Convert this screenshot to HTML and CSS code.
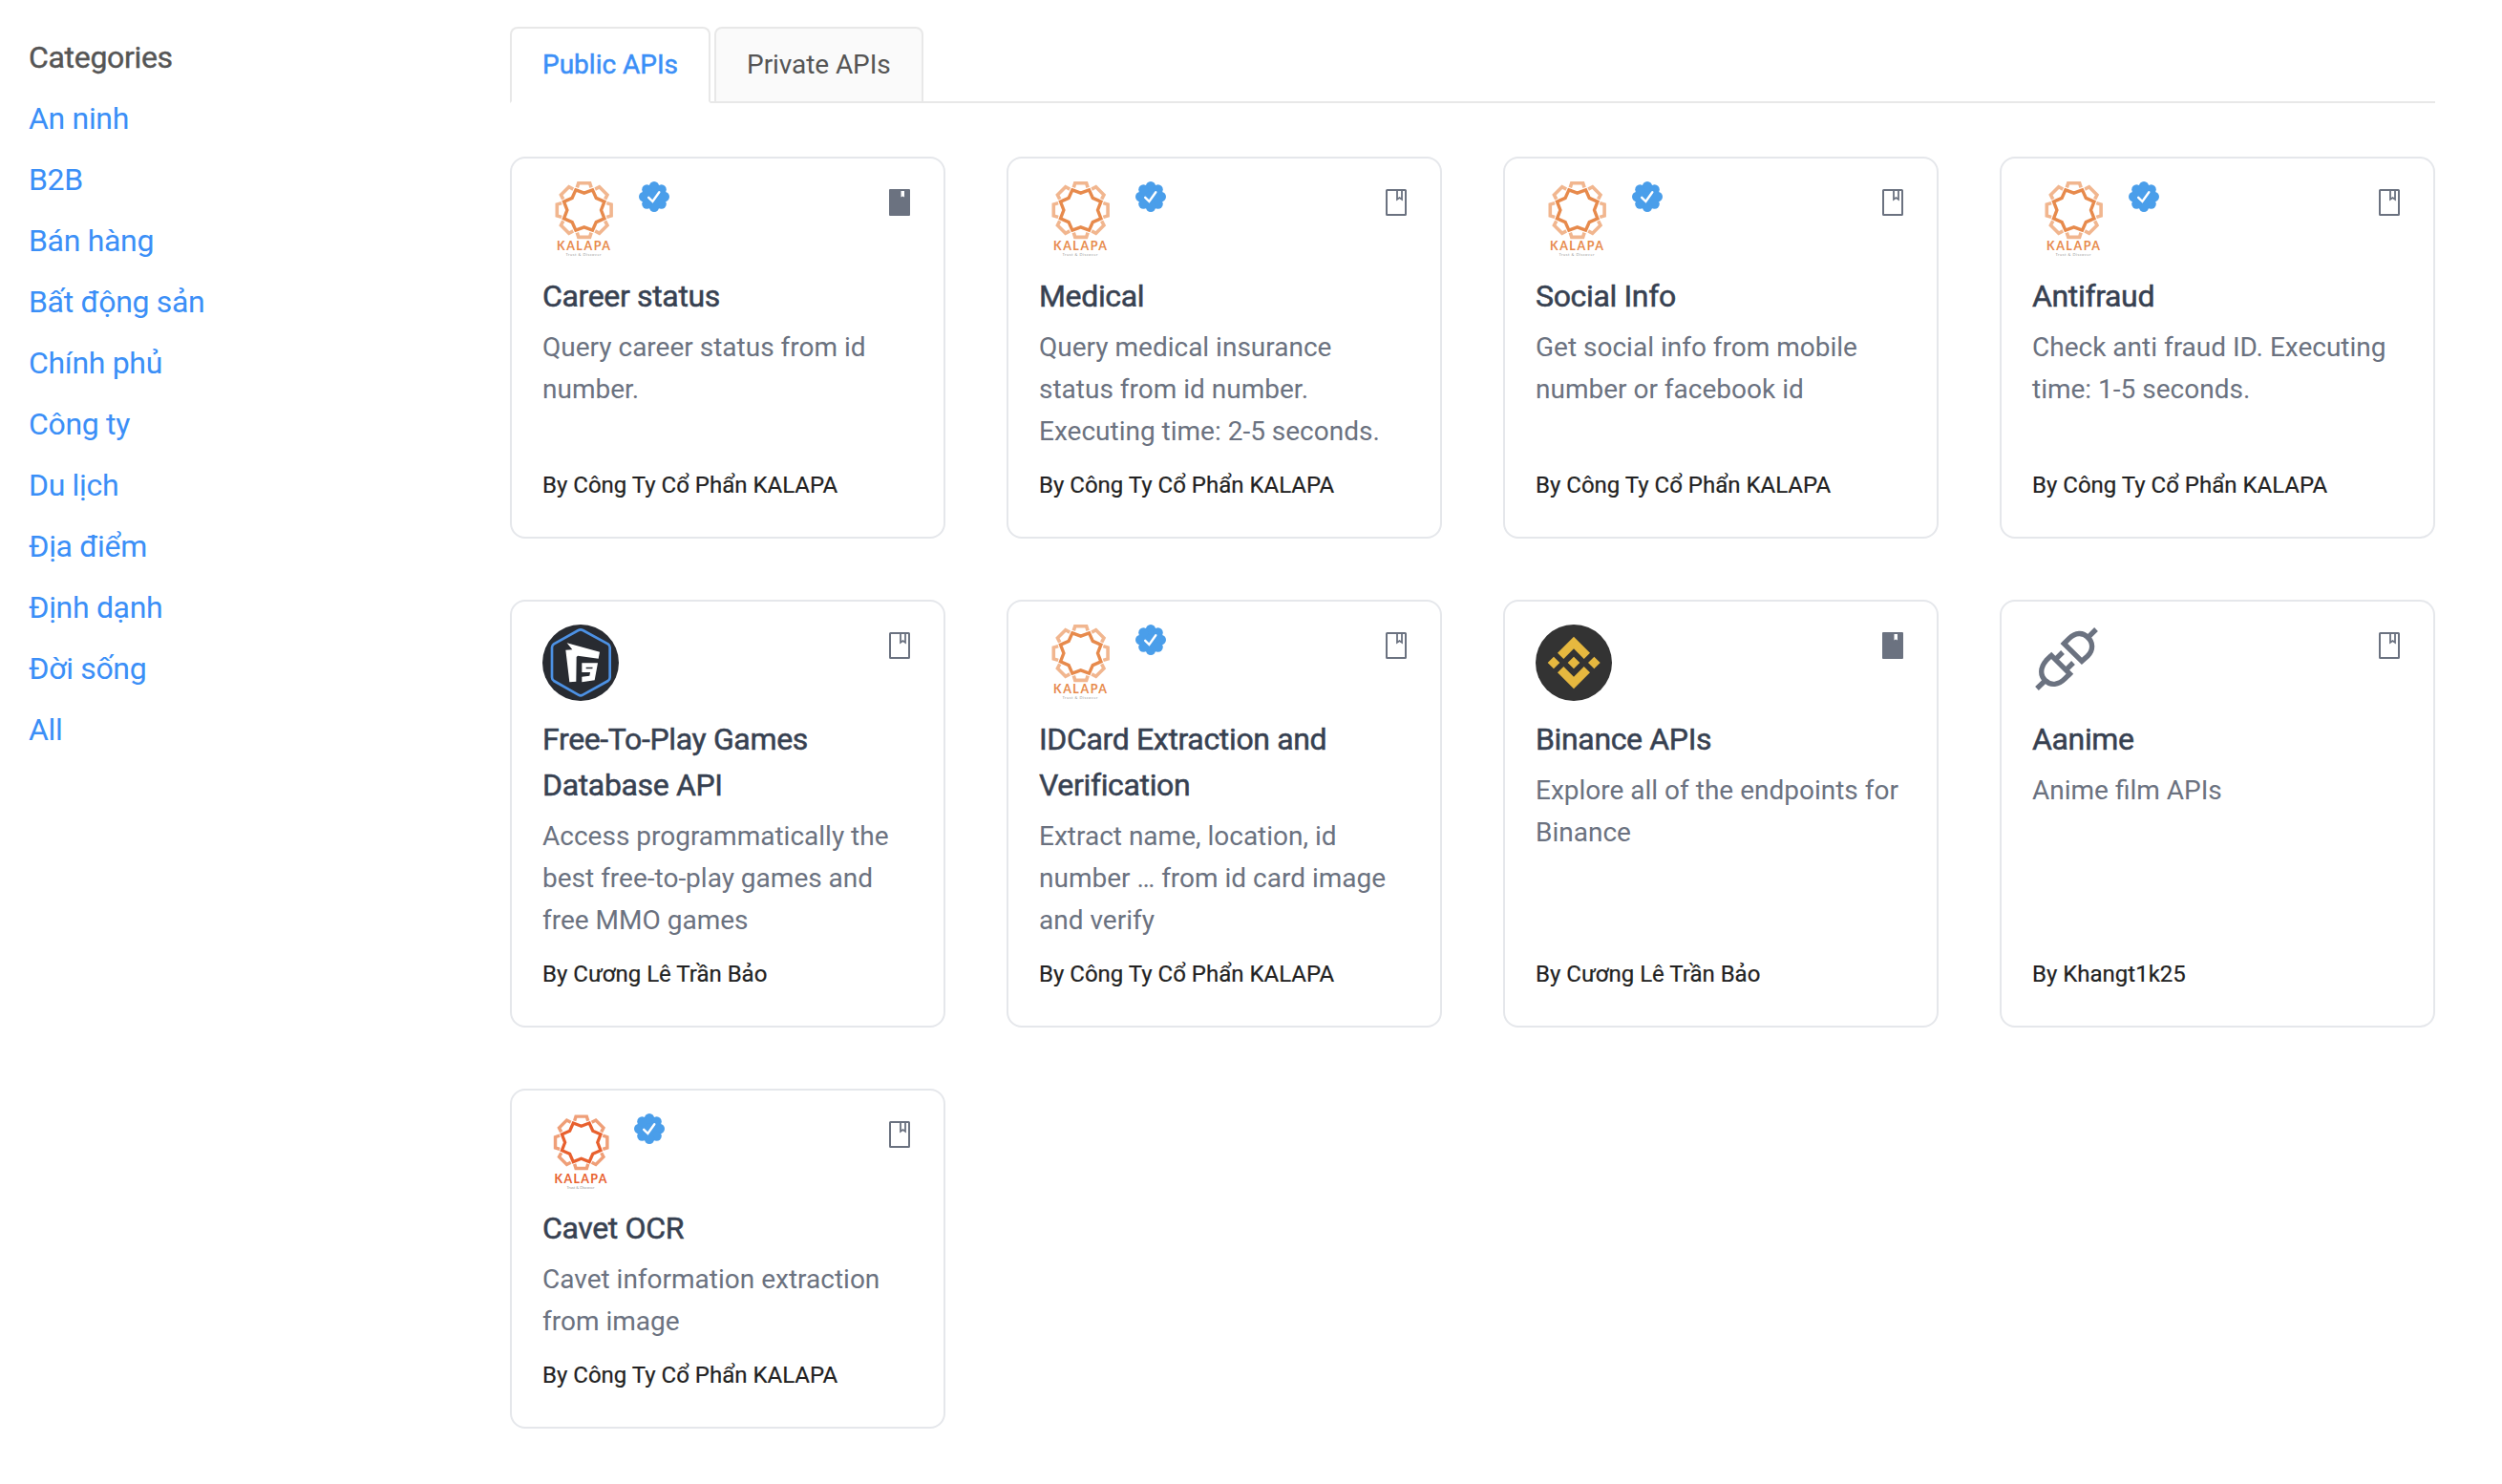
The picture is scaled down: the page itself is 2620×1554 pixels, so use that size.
FILE: index.html
```
<!DOCTYPE html>
<html lang="vi">
<head>
<meta charset="utf-8">
<title>API Hub</title>
<link rel="stylesheet" href="styles.css">
</head>
<body>
<svg class="sprite" aria-hidden="true">
  <defs>
    <path id="leaf" d="M-7.4-23.6-5.9-28.4H5.9L7.4-23.6"/>
    <g id="gear">
      <g class="petals">
        <use href="#leaf"/><use href="#leaf" transform="rotate(45)"/><use href="#leaf" transform="rotate(90)"/><use href="#leaf" transform="rotate(135)"/><use href="#leaf" transform="rotate(180)"/><use href="#leaf" transform="rotate(225)"/><use href="#leaf" transform="rotate(270)"/><use href="#leaf" transform="rotate(315)"/>
      </g>
      <path class="star" d="M-8.8-21.2 0-17.8 8.8-21.2 12.6-12.6 21.2-8.8 17.8 0 21.2 8.8 12.6 12.6 8.8 21.2 0 17.8-8.8 21.2-12.6 12.6-21.2 8.8-17.8 0-21.2-8.8-12.6-12.6Z"/>
    </g>
  </defs>
  <symbol id="kalapa" viewBox="0 0 85 80">
    <use href="#gear" transform="translate(43.7 30)"/>
    <text class="brand" x="15" y="72" textLength="56">KALAPA</text>
    <text class="motto" x="24.5" y="78" textLength="37">Trust &amp; Discover</text>
  </symbol>
  <symbol id="kalapa-small" viewBox="0 0 80 80">
    <use href="#gear" transform="translate(40.7 30.3) scale(.957)"/>
    <text class="brand" x="12.5" y="73" textLength="55">KALAPA</text>
    <text class="motto" x="25.5" y="78.5" textLength="29">Trust &amp; Discover</text>
  </symbol>
  <symbol id="verified" viewBox="0 0 32 32">
    <g fill="#4a9eea"><circle cx="16" cy="16" r="12.5"/><circle cx="16" cy="5.2" r="5.2"/><circle cx="23.6" cy="8.4" r="5.2"/><circle cx="26.8" cy="16" r="5.2"/><circle cx="23.6" cy="23.6" r="5.2"/><circle cx="16" cy="26.8" r="5.2"/><circle cx="8.4" cy="23.6" r="5.2"/><circle cx="5.2" cy="16" r="5.2"/><circle cx="8.4" cy="8.4" r="5.2"/></g>
    <path d="M10.2 16.8 14.4 21 21.3 11.2" fill="none" stroke="#fff" stroke-width="2.4" stroke-linecap="round"/>
  </symbol>
  <symbol id="mark" viewBox="0 0 28 28">
    <rect x="4" y="1" width="20" height="26" rx=".6" fill="none" stroke="#6b7280" stroke-width="2"/>
    <path d="M15 1V10.8L17.5 9 20 10.8V1" fill="none" stroke="#6b7280" stroke-width="1.8"/>
  </symbol>
  <symbol id="mark-full" viewBox="0 0 28 28">
    <rect x="3" y="0" width="22" height="28" rx="1" fill="#6b7280"/>
    <path d="M15.5 2H19V8.6L17.2 7.6 15.5 8.6Z" fill="#fff"/>
  </symbol>
</svg>
<div class="page">
  <nav class="sidebar">
    <h2>Categories</h2>
    <a>An ninh</a><a>B2B</a><a>Bán hàng</a><a>Bất động sản</a><a>Chính phủ</a><a>Công ty</a><a>Du lịch</a><a>Địa điểm</a><a>Định dạnh</a><a>Đời sống</a><a>All</a>
  </nav>
  <main class="content">
    <div class="tabs"><div class="tab active">Public APIs</div><div class="tab">Private APIs</div></div>
    <div class="grid">
      <article class="card">
        <header><svg class="logo wide"><use href="#kalapa"/></svg><svg class="badge"><use href="#verified"/></svg><svg class="mark"><use href="#mark-full"/></svg></header>
        <h3>Career status</h3>
        <p>Query career status from id number.</p>
        <footer>By Công Ty Cổ Phẩn KALAPA</footer>
      </article>
      <article class="card">
        <header><svg class="logo wide"><use href="#kalapa"/></svg><svg class="badge"><use href="#verified"/></svg><svg class="mark"><use href="#mark"/></svg></header>
        <h3>Medical</h3>
        <p>Query medical insurance status from id number. Executing time: 2-5 seconds.</p>
        <footer>By Công Ty Cổ Phẩn KALAPA</footer>
      </article>
      <article class="card">
        <header><svg class="logo wide"><use href="#kalapa"/></svg><svg class="badge"><use href="#verified"/></svg><svg class="mark"><use href="#mark"/></svg></header>
        <h3>Social Info</h3>
        <p>Get social info from mobile number or facebook id</p>
        <footer>By Công Ty Cổ Phẩn KALAPA</footer>
      </article>
      <article class="card">
        <header><svg class="logo wide"><use href="#kalapa"/></svg><svg class="badge"><use href="#verified"/></svg><svg class="mark"><use href="#mark"/></svg></header>
        <h3>Antifraud</h3>
        <p>Check anti fraud ID. Executing time: 1-5 seconds.</p>
        <footer>By Công Ty Cổ Phẩn KALAPA</footer>
      </article>
      <article class="card">
        <header>
          <svg class="logo" viewBox="24 42 240 240"><circle cx="144" cy="162" r="120" fill="#282b31"/><path d="M137 60Q144 56 151 60L230 103Q236 107 236 114V208Q236 215 230 219L151 263Q144 267 137 263L60 219Q54 215 54 208V114Q54 107 60 103Z" fill="none" stroke="#4c91e4" stroke-width="8"/><path d="M101 100 204 128 200 149 135 140 131 144 130 221 109 223 97 122 118 121ZM148 163H198L188 217 148 223V206L172 203 174 192H148ZM161 176V181H181L182 176Z" fill="#fff" fill-rule="evenodd"/></svg>
          <svg class="mark"><use href="#mark"/></svg>
        </header>
        <h3>Free-To-Play Games Database API</h3>
        <p>Access programmatically the best free-to-play games and free MMO games</p>
        <footer>By Cương Lê Trần Bảo</footer>
      </article>
      <article class="card">
        <header><svg class="logo wide"><use href="#kalapa"/></svg><svg class="badge"><use href="#verified"/></svg><svg class="mark"><use href="#mark"/></svg></header>
        <h3>IDCard Extraction and Verification</h3>
        <p>Extract name, location, id number … from id card image and verify</p>
        <footer>By Công Ty Cổ Phẩn KALAPA</footer>
      </article>
      <article class="card">
        <header>
          <svg class="logo" viewBox="54 42 240 240"><circle cx="174" cy="162" r="120" fill="#333"/><path d="M174 80 225 131 206 150 174 118 142 150 123 131ZM174 244 225 193 206 174 174 206 142 174 123 193ZM174 143 193 162 174 181 155 162ZM111 143 130 162 111 181 92 162ZM238 143 257 162 238 181 219 162Z" fill="#e6b83f"/></svg>
          <svg class="mark"><use href="#mark-full"/></svg>
        </header>
        <h3>Binance APIs</h3>
        <p>Explore all of the endpoints for Binance</p>
        <footer>By Cương Lê Trần Bảo</footer>
      </article>
      <article class="card">
        <header>
          <svg class="logo" viewBox="54 42 240 240"><g fill="none" stroke="#6b7280" stroke-width="16"><path d="M154 102 170 86C190 66 214 66 228 82 246 97 247 122 228 141L210 157ZM229 83 255 57M109 134 178 203M114 139 98 155C78 178 79 203 96 218 112 235 137 232 157 212L173 196M97 216 69 243M127 152 150 129M160 185 183 162"/></g></svg>
          <svg class="mark"><use href="#mark"/></svg>
        </header>
        <h3>Aanime</h3>
        <p>Anime film APIs</p>
        <footer>By Khangt1k25</footer>
      </article>
      <article class="card">
        <header><svg class="logo vivid"><use href="#kalapa-small"/></svg><svg class="badge"><use href="#verified"/></svg><svg class="mark"><use href="#mark"/></svg></header>
        <h3>Cavet OCR</h3>
        <p>Cavet information extraction from image</p>
        <footer>By Công Ty Cổ Phẩn KALAPA</footer>
      </article>
    </div>
  </main>
</div>
</body>
</html>
```
FILE: styles.css
```
* { box-sizing: border-box; }
body { margin: 0; background: #fff; font-family: Roboto, "Liberation Sans", sans-serif; }
h2, h3, p { margin: 0; font-weight: 400; }
svg { display: block; }
.sprite { display: none; }

.page { display: flex; }
.sidebar { display: flex; flex-direction: column; width: 534px; padding: 28px 0 0 30px; font-size: 32px; line-height: 64px; letter-spacing: -.32px; color: #3b8ff7; }
.sidebar h2 { font-size: 32px; line-height: 64px; color: #555; -webkit-text-stroke: .4px; }
.content { width: 2016px; padding-top: 28px; }

.tabs { display: flex; gap: 4px; height: 80px; box-shadow: inset 0 -2px #e8e8e8; }
.tab { padding: 0 32px; border: 2px solid #e8e8e8; border-radius: 8px 8px 0 0; background: #fafafa; color: #555; font-size: 28px; line-height: 76px; letter-spacing: -.08px; }
.tab.active { background: #fff; border-bottom-color: #fff; color: #3b8ff7; letter-spacing: 0; -webkit-text-stroke: .5px; }

.grid { display: grid; grid-template-columns: repeat(4, 456px); gap: 64px; padding-top: 56px; }
.card { display: flex; flex-direction: column; padding: 24px 32px 32px; border: 2px solid #e5e7eb; border-radius: 16px; }
.card header { display: flex; height: 80px; margin-bottom: 16px; }
.logo { width: 80px; height: 80px; --ink: #e78a4c; --tint: #f1b68f; }
.logo.wide { width: 85px; }
.logo.vivid { --ink: #e8602e; --tint: #ef9f78; }
.badge { width: 32px; height: 32px; margin-left: 16px; }
.mark { width: 28px; height: 28px; margin: 8px 0 0 auto; }
.card h3 { font-size: 32px; line-height: 48px; letter-spacing: -.35px; color: #374151; -webkit-text-stroke: .5px; }
.card p { flex: 1; margin: 8px 0 12px; font-size: 28px; line-height: 44px; color: #6b7280; }
.card footer { font-size: 24px; line-height: 44px; color: #222; -webkit-text-stroke: .2px; }

.petals, .star { fill: none; }
.petals { stroke: var(--tint); stroke-width: 3.6; }
.star { stroke: var(--ink); stroke-width: 3.4; }
.brand { font: 700 12.5px Lato, sans-serif; fill: var(--ink); }
.motto { font: 4px Lato, sans-serif; fill: #999; }
```
